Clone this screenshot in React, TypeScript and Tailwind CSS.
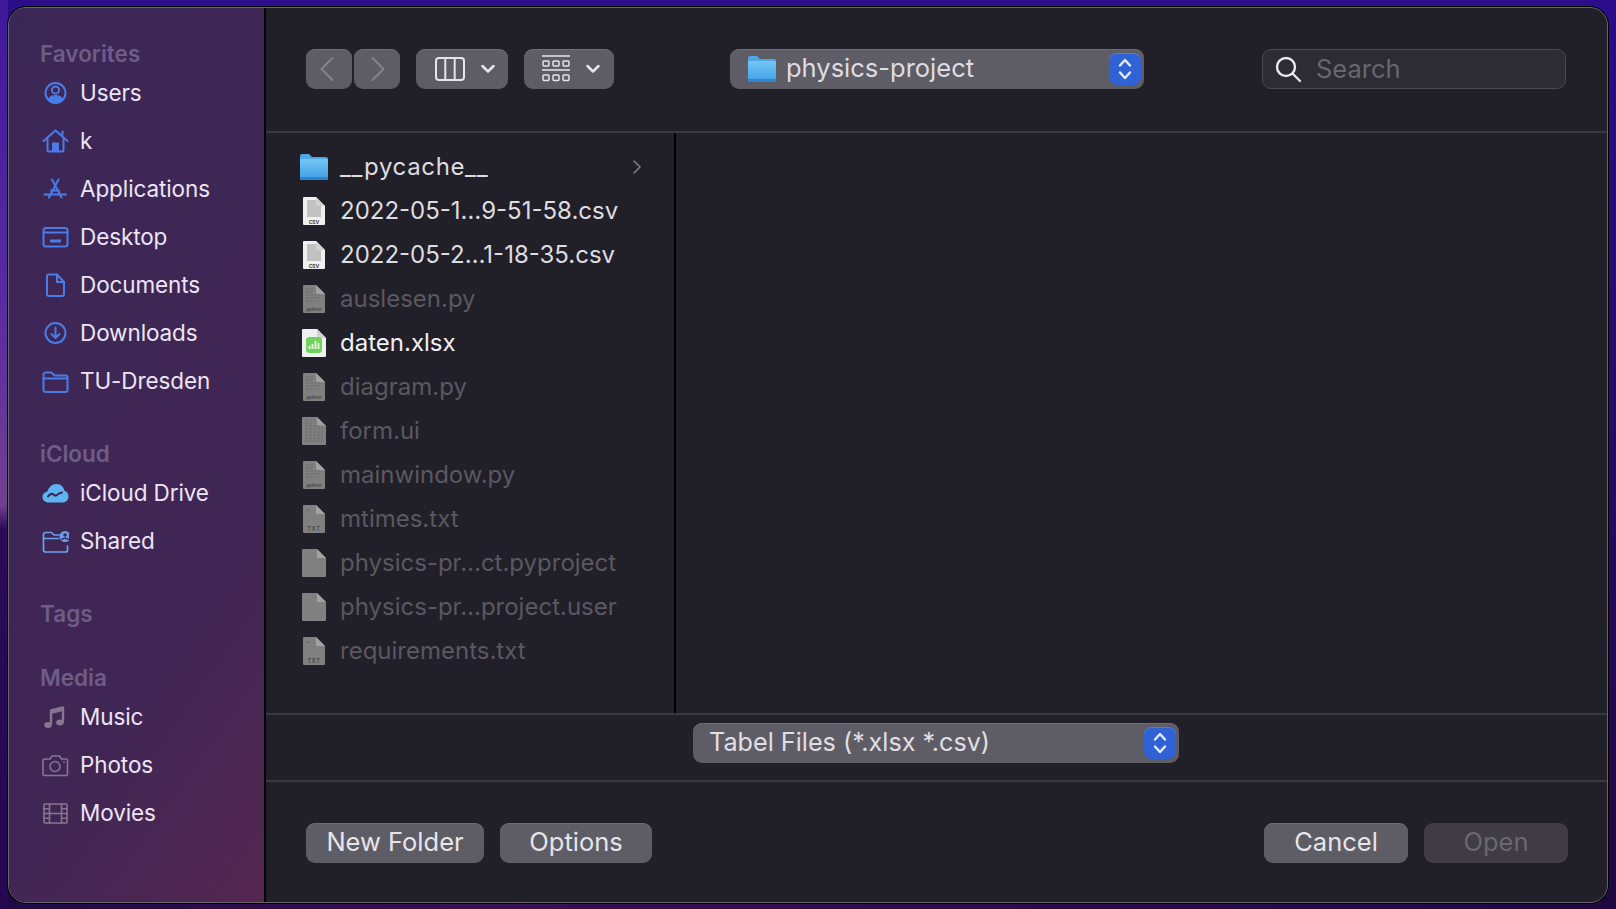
import type { ReactNode } from "react";

const blue = "#4a7ce8";
const gray = "#84778f";

function Glyph({ children }: { children: ReactNode }) {
  return (
    <svg width="28" height="28" viewBox="0 0 28 28" fill="none" strokeWidth="2" strokeLinecap="round" strokeLinejoin="round" className="shrink-0">
      {children}
    </svg>
  );
}

const sidebarIcons: Record<string, ReactNode> = {
  Users: (
    <Glyph>
      <circle cx="14.5" cy="14" r="10" stroke={blue} />
      <circle cx="14.5" cy="11" r="3.6" stroke={blue} />
      <path d="M7 20c1.6-3.2 4.4-4 7.5-4s5.900.8 7.500 4c-1.800 2.700-4.400 4-7.500 4s-5.700-1.300-7.500-4z" fill={blue} />
    </Glyph>
  ),
  k: (
    <Glyph>
      <path d="M2.500 14 14.500 3.500 26.500 14" stroke={blue} />
      <path d="M21.500 4.500v3.500" stroke={blue} />
      <path d="M6.500 11.500V23a1.500 1.500 0 0 0 1.500 1.500h13a1.500 1.500 0 0 0 1.500-1.500V11.500" stroke={blue} />
      <path d="M11 24v-7.500a1 1 0 0 1 1-1h5a1 1 0 0 1 1 1V24z" fill={blue} />
    </Glyph>
  ),
  Applications: (
    <Glyph>
      <path d="M11 4.500 20.500 22.500M17.500 4.500 8 22.500M3.500 19.500h21.500" stroke={blue} />
      <path d="M10 15.500h8" stroke={blue} />
    </Glyph>
  ),
  Desktop: (
    <Glyph>
      <rect x="2.500" y="5" width="24" height="18.500" rx="2.500" stroke={blue} />
      <path d="M2.500 9.500h24" stroke={blue} />
      <rect x="9" y="16.500" width="11" height="3" fill={blue} stroke="none" />
    </Glyph>
  ),
  Documents: (
    <Glyph>
      <path d="M8 3.500h8l7 7.500v12a2 2 0 0 1-2 2H8a2 2 0 0 1-2-2v-17.500a2 2 0 0 1 2-2z" stroke={blue} />
      <path d="M16 3.500V11h7" stroke={blue} />
    </Glyph>
  ),
  Downloads: (
    <Glyph>
      <circle cx="14.500" cy="14" r="10" stroke={blue} />
      <path d="M14.500 8.500V19M10.500 15l4 4 4-4" stroke={blue} />
    </Glyph>
  ),
  "TU-Dresden": (
    <Glyph>
      <path d="M2.500 9V7.500a2 2 0 0 1 2-2h6l3 3h11a2 2 0 0 1 2 2V23a2 2 0 0 1-2 2h-20a2 2 0 0 1-2-2z" stroke={blue} />
      <path d="M2.500 11.500h24" stroke={blue} />
    </Glyph>
  ),
  "iCloud Drive": (
    <Glyph>
      <path d="M8 23.500c-4 0-6.500-2.500-6.500-5.500 0-2.800 2.200-5 4.800-5.300C7.500 8.500 11 5 15.500 5c4.200 0 7.300 2.900 7.900 6.800 2.500.6 4.100 2.900 4.100 5.700 0 3.400-2.500 6-6 6z" fill="#5cb5f2" />
      <path d="M7 17.500c1.500-2 3-3 4.500-2.500s2 2 3.500 1.500 2.500-2.500 6-3" stroke="#3d2755" />
    </Glyph>
  ),
  Shared: (
    <Glyph>
      <path d="M2.500 8V7.500a2 2 0 0 1 2-2h6l2.500 2.500h5M2.500 8v15a2 2 0 0 0 2 2h20a2 2 0 0 0 2-2v-4" stroke="#6d9fe6" strokeWidth="1.700" />
      <path d="M2.500 11.500h15" stroke="#6d9fe6" strokeWidth="1.700" />
      <circle cx="24" cy="9.500" r="5.500" fill="#6d9fe6" />
      <circle cx="24" cy="8" r="1.800" fill="#3d2755" />
      <path d="M20.800 12.500c1-1.600 5.400-1.600 6.400 0" stroke="#3d2755" strokeWidth="1.500" />
    </Glyph>
  ),
  Music: (
    <Glyph>
      <path d="M10 21V7.500l12-3V18" stroke={gray} strokeWidth="2.400" />
      <path d="M10 7.500l12-3v3l-12 3z" fill={gray} stroke={gray} strokeWidth="1" />
      <ellipse cx="7" cy="22" rx="3.800" ry="3" fill={gray} />
      <ellipse cx="19" cy="19.500" rx="3.800" ry="3" fill={gray} />
    </Glyph>
  ),
  Photos: (
    <Glyph>
      <path d="M3.500 8h5.500l2-3h7.500l2 3h4.500a1.500 1.500 0 0 1 1.500 1.500V23a1.500 1.500 0 0 1-1.500 1.500H3.500A1.500 1.500 0 0 1 2 23V9.500A1.500 1.500 0 0 1 3.500 8z" stroke={gray} strokeWidth="1.600" />
      <circle cx="14" cy="15.500" r="5" stroke={gray} strokeWidth="1.600" />
      <circle cx="23" cy="11" r="0.900" fill={gray} />
    </Glyph>
  ),
  Movies: (
    <Glyph>
      <rect x="3" y="5" width="23" height="19" rx="1" stroke={gray} strokeWidth="1.600" />
      <path d="M8.500 5v19M20.500 5v19M8.500 14.500h12M3 9.800h5.500M3 14.500h5.500M3 19.200h5.500M20.500 9.800H26M20.500 14.500H26M20.500 19.200H26" stroke={gray} strokeWidth="1.600" />
    </Glyph>
  ),
};

const sections = [
  { title: "Favorites", items: ["Users", "k", "Applications", "Desktop", "Documents", "Downloads", "TU-Dresden"] },
  { title: "iCloud", items: ["iCloud Drive", "Shared"] },
  { title: "Tags", items: [] },
  { title: "Media", items: ["Music", "Photos", "Movies"] },
];

type FileKind = "folder" | "csv" | "py" | "xlsx" | "ui" | "txt" | "blank";

const files: { name: string; kind: FileKind; tone: "on" | "off" | "bright" }[] = [
  { name: "__pycache__", kind: "folder", tone: "on" },
  { name: "2022-05-1…9-51-58.csv", kind: "csv", tone: "on" },
  { name: "2022-05-2…1-18-35.csv", kind: "csv", tone: "on" },
  { name: "auslesen.py", kind: "py", tone: "off" },
  { name: "daten.xlsx", kind: "xlsx", tone: "bright" },
  { name: "diagram.py", kind: "py", tone: "off" },
  { name: "form.ui", kind: "ui", tone: "off" },
  { name: "mainwindow.py", kind: "py", tone: "off" },
  { name: "mtimes.txt", kind: "txt", tone: "off" },
  { name: "physics-pr…ct.pyproject", kind: "blank", tone: "off" },
  { name: "physics-pr…project.user", kind: "blank", tone: "off" },
  { name: "requirements.txt", kind: "txt", tone: "off" },
];

function FolderIcon() {
  return (
    <svg width="28" height="28" viewBox="0 0 28 28" className="shrink-0">
      <defs>
        <linearGradient id="fold" x1="0" y1="0" x2="0" y2="1">
          <stop offset="0" stopColor="#74c6f4" />
          <stop offset="1" stopColor="#3f9ee6" />
        </linearGradient>
      </defs>
      <path d="M0 3a2 2 0 0 1 2-2h7l3 3h14a2 2 0 0 1 2 2v19a2 2 0 0 1-2 2H2a2 2 0 0 1-2-2z" fill="#4ea6e8" />
      <path d="M0 7a1 1 0 0 1 1-1h26a1 1 0 0 1 1 1v18a2 2 0 0 1-2 2H2a2 2 0 0 1-2-2z" fill="url(#fold)" />
      <path d="M0 24h28v1a2 2 0 0 1-2 2H2a2 2 0 0 1-2-2z" fill="#2f86cc" />
    </svg>
  );
}

function PageIcon({ kind }: { kind: FileKind }) {
  if (kind === "folder") return <FolderIcon />;
  const wide = kind === "ui" || kind === "blank" || kind === "xlsx";
  const fill = kind === "csv" || kind === "xlsx" ? "#f0f0f0" : "#808081";
  const ink = kind === "csv" ? "#c2c2c2" : "#6c6c6d";
  const left = wide ? 0 : 1;
  const right = wide ? 24 : 23;
  return (
    <svg width="24" height="28" viewBox="0 0 24 28" className="ml-0.5">
      <path d={`M${left} 1a1 1 0 0 1 1-1H${right - 9}L${right} 9V27a1 1 0 0 1-1 1H${left + 1}a1 1 0 0 1-1-1z`} fill={fill} />
      <path d={`M${right - 9} 0V9H${right}z`} fill={kind === "csv" || kind === "xlsx" ? "#d2d2d2" : "#a2a2a3"} />
      {kind === "csv" && (
        <>
          <rect x="5" y="3" width="9" height="6" fill={ink} />
          <rect x="5" y="9" width="14" height="11" fill={ink} />
        </>
      )}
      {kind === "py" &&
        [4, 7, 10, 13, 16].map((y) => (
          <path key={y} d={`M4 ${y}H${y < 9 ? 11 : y === 16 ? 14 : 18}`} stroke={ink} strokeWidth="1" strokeDasharray="3 1" />
        ))}
      {kind === "ui" &&
        [3, 6, 9, 12, 15, 18, 21, 24].map((y) => (
          <path key={y} d={`M3 ${y}H${y < 9 ? 12 : 21}`} stroke={ink} strokeWidth="1" strokeDasharray="3 1" />
        ))}
      {kind === "csv" && (
        <text x="12" y="26.500" textAnchor="middle" fontSize="5" fontWeight="700" fill="#444444" fontFamily="Inter, sans-serif">
          CSV
        </text>
      )}
      {kind === "py" && (
        <text x="12" y="26" textAnchor="middle" fontSize="4.500" fontStyle="italic" fill="#2c2c2c" fontFamily="Inter, sans-serif">
          python
        </text>
      )}
      {kind === "txt" && (
        <>
          <rect x="5" y="4" width="2" height="2" fill={ink} />
          <text x="12" y="26" textAnchor="middle" fontSize="5.500" letterSpacing="0.800" fill="#2c2c2c" fontFamily="Inter, sans-serif">
            TXT
          </text>
        </>
      )}
      {kind === "xlsx" && (
        <>
          <rect x="4" y="8" width="16" height="16" rx="3.500" fill="#6fd35e" />
          <path d="M7.500 20v-3M10.500 20v-5M13.500 20v-8M16.500 20v-6" stroke="#eef9ea" strokeWidth="1.800" />
        </>
      )}
    </svg>
  );
}

function Stepper({ className }: { className: string }) {
  return (
    <span className={`flex items-center justify-center rounded-lg bg-[#2f62d5] shadow-[inset_0_1px_0_#4f7fe6] ${className}`}>
      <svg width="16" height="26" viewBox="0 0 16 26" fill="none" stroke="#e4ecfb" strokeWidth="2.400" strokeLinecap="round" strokeLinejoin="round">
        <path d="M3 9.500 8 4l5 5.500M3 16.500 8 22l5-5.500" />
      </svg>
    </span>
  );
}

const btn = "flex items-center justify-center h-10 rounded-[9px] bg-[#5e5c64] shadow-[inset_0_1px_0_#6e6c74] text-[#e6e5e9] text-[25.500px]";

function Chevron() {
  return (
    <svg width="16" height="12" viewBox="0 0 16 12" fill="none" stroke="#e6e5e9" strokeWidth="2.500" strokeLinecap="round" strokeLinejoin="round">
      <path d="M2.500 3 8 8.500 13.500 3" />
    </svg>
  );
}

function Sidebar() {
  return (
    <aside className="w-[257px] shrink-0 border-r-2 border-black pt-[30px] pl-[31px] bg-[linear-gradient(125deg,#3b2755_0%,#412655_70%,#542650_100%)]">
      {sections.map((s) => (
        <section key={s.title} className="mb-[33px]">
          <h2 className="h-[31px] flex items-center text-[22.500px] font-semibold text-[#6f5c88]">{s.title}</h2>
          {s.items.map((item) => (
            <div key={item} className="h-12 flex items-center gap-[11px] pl-px text-[22.500px] tracking-[-0.1px] text-[#ece5f1]">
              {sidebarIcons[item]}
              <span className="whitespace-nowrap">{item}</span>
            </div>
          ))}
        </section>
      ))}
    </aside>
  );
}

function Toolbar() {
  return (
    <header className="h-[125px] shrink-0 border-b-2 border-[#39373f] pl-10 pt-[41px] flex items-start">
      <button className={`${btn} w-[46px] pr-1`}>
        <svg width="16" height="26" viewBox="0 0 16 26" fill="none" stroke="#85838b" strokeWidth="2" strokeLinecap="round" strokeLinejoin="round">
          <path d="M13.500 2 2.500 13l11 11" />
        </svg>
      </button>
      <button className={`${btn} w-[46px] ml-0.5 pl-0.5`}>
        <svg width="16" height="26" viewBox="0 0 16 26" fill="none" stroke="#85838b" strokeWidth="2" strokeLinecap="round" strokeLinejoin="round">
          <path d="M2.500 2l11 11-11 11" />
        </svg>
      </button>
      <button className={`${btn} w-[92px] ml-4 gap-[15px] pl-1.5`}>
        <svg width="30" height="24" viewBox="0 0 30 24" fill="none" stroke="#e6e5e9" strokeWidth="2">
          <rect x="1" y="1" width="28" height="22" rx="3" />
          <path d="M10.300 1v22M19.700 1v22" />
        </svg>
        <Chevron />
      </button>
      <button className={`${btn} w-[90px] ml-4 gap-[15px] pl-[5px]`}>
        <svg width="28" height="28" viewBox="0 0 28 28" fill="none" stroke="#e6e5e9">
          <path d="M0 1h28M0 15h28" strokeWidth="1.500" />
          <rect x="1" y="6" width="6" height="5" rx="1" strokeWidth="1.500" />
          <rect x="11" y="6" width="6" height="5" rx="1" strokeWidth="1.500" />
          <rect x="21" y="6" width="6" height="5" rx="1" strokeWidth="1.500" />
          <rect x="1" y="20" width="6" height="5.500" rx="1" strokeWidth="1.500" />
          <rect x="11" y="20" width="6" height="5.500" rx="1" strokeWidth="1.500" />
          <rect x="21" y="20" width="6" height="5.500" rx="1" strokeWidth="1.500" />
        </svg>
        <Chevron />
      </button>
      <div className={`${btn} w-[414px] ml-[116px] !justify-start pl-[18px] gap-2.5`}>
        <FolderIcon />
        <span className="text-[#dedde2] -translate-y-px">physics-project</span>
        <Stepper className="ml-auto mr-[3px] w-[32px] h-[32px]" />
      </div>
      <div className="w-[304px] h-10 ml-[118px] flex items-center gap-[14px] pl-3 rounded-[9px] border border-[#4b4951] bg-[#2d2b34] text-[25.500px] text-[#68666e]">
        <svg width="27" height="27" viewBox="0 0 27 27" fill="none" stroke="#e9e8ec" strokeWidth="2.400" strokeLinecap="round">
          <circle cx="11" cy="11" r="9" />
          <path d="M17.500 17.500 25 25" />
        </svg>
        <span>Search</span>
      </div>
    </header>
  );
}

function FileList() {
  return (
    <div className="h-[582px] shrink-0 border-b-2 border-[#39373f] flex">
      <div className="w-[410px] shrink-0 border-r-2 border-black pt-3">
        {files.map((f) => (
          <div key={f.name} className="h-11 flex items-center pl-[34px] pr-8 text-[24px]">
            <span className="w-[40px] shrink-0 flex">
              <PageIcon kind={f.kind} />
            </span>
            <span
              className={`whitespace-nowrap ${f.kind === "folder" ? "tracking-[0.65px]" : ""} ${
                f.tone === "off" ? "text-[#5a5861]" : f.tone === "bright" ? "text-[#f1f0f3]" : "text-[#dddce1]"
              }`}
            >
              {f.name}
            </span>
            {f.kind === "folder" && (
              <svg className="ml-auto" width="10" height="16" viewBox="0 0 10 16" fill="none" stroke="#7d7b83" strokeWidth="1.600" strokeLinecap="round" strokeLinejoin="round">
                <path d="M2 2l6 6-6 6" />
              </svg>
            )}
          </div>
        ))}
      </div>
    </div>
  );
}

export default function App() {
  return (
    <div className="h-[909px] w-full pt-[7px] px-2 pb-[6px] font-['Inter',sans-serif] bg-no-repeat bg-[linear-gradient(to_bottom,#3f189c_0,#5a2aa0_300px,#703f92_505px,#2c0a58_530px,#250850_100%),linear-gradient(90deg,#1e0a45_0%,#3a1050_30%,#2c0c4c_60%,#1f0840_100%),linear-gradient(to_bottom,#2c0d8a_0%,#1f0840_100%)] [background-size:8px_100%,100%_7px,100%_100%] [background-position:0_0,0_100%,0_0]">
      <div className="h-[896px] flex rounded-[18px] overflow-hidden border border-[#66646c] shadow-[0_0_0_1px_#000] bg-[#211f28]">
        <Sidebar />
        <main className="flex-1 flex flex-col min-w-0">
          <Toolbar />
          <FileList />
          <div className="h-[67px] shrink-0 border-b-2 border-[#39373f] pt-2 pl-[427px]">
            <div className={`${btn} w-[486px] !justify-start pl-4`}>
              <span className="text-[#e0dfe4] text-[25.200px]">Tabel Files (*.xlsx *.csv)</span>
              <Stepper className="ml-auto mr-[3px] w-[32px] h-[32px]" />
            </div>
          </div>
          <footer className="flex-1 flex items-start pt-[41px] pl-10 gap-4">
            <button className={`${btn} w-[178px]`}>
              <span className="-translate-y-px">New Folder</span>
            </button>
            <button className={`${btn} w-[152px]`}>
              <span className="-translate-y-px">Options</span>
            </button>
            <button className={`${btn} w-[144px] ml-auto`}>
              <span className="-translate-y-px">Cancel</span>
            </button>
            <button className="flex items-center justify-center h-10 w-[144px] mr-[39px] rounded-[9px] bg-[#3f3c45] text-[25.500px] text-[#6a686f]">
              <span className="-translate-y-px">Open</span>
            </button>
          </footer>
        </main>
      </div>
    </div>
  );
}
